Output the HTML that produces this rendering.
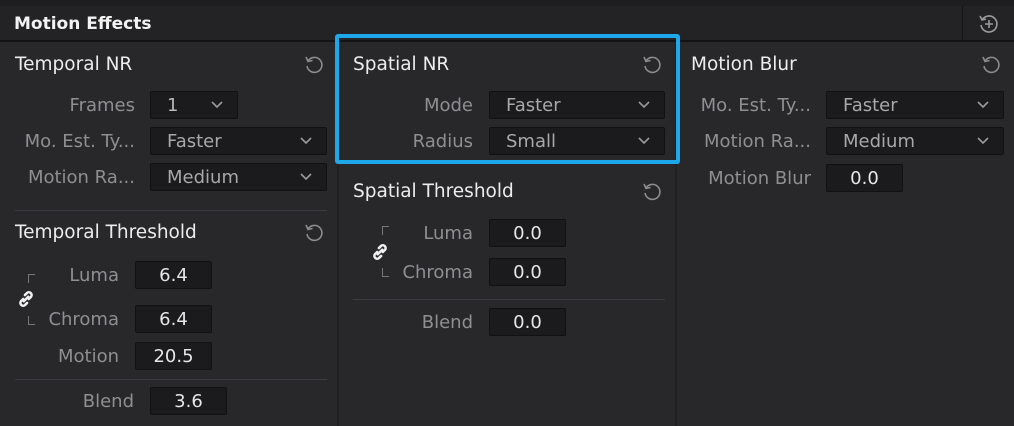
<!DOCTYPE html>
<html><head><style>
*{margin:0;padding:0;box-sizing:border-box}
body{width:1014px;height:426px;background:#28282b;font-family:"DejaVu Sans","Liberation Sans",sans-serif;position:relative;overflow:hidden}
.a{position:absolute}
.t{position:absolute;color:#ececec;font-size:18.5px;line-height:22px;transform:translateY(1px)}
.l{position:absolute;color:#8f8f92;font-size:18px;line-height:22px;text-align:right;white-space:nowrap;transform:translateY(1px)}
.f{position:absolute;background:#1b1b1d;border:1px solid #111;border-radius:2px;color:#e6e6e6;font-size:18px;line-height:27px;text-align:center}
.d{position:absolute;background:#1b1b1d;border:1px solid #111;border-radius:2px;color:#a8a8aa;font-size:18px;line-height:27px;padding-left:16px}
.d svg{position:absolute;right:14px;top:9px}
.hr{position:absolute;height:1px;background:#3c3c40}
.r{position:absolute;width:22px;height:22px}
</style></head><body>
<div class="a" style="left:0;top:0;width:1014px;height:6px;background:#1e1e20"></div>
<div class="a" style="left:0;top:6px;width:1014px;height:35px;background:#232326"></div>
<div class="a" style="left:0;top:40px;width:1014px;height:2px;background:#141416"></div>
<div class="a" style="left:962px;top:6px;width:1px;height:35px;background:#141416"></div>
<div class="t" style="left:14px;top:12px;font-weight:bold;color:#f2f2f2;font-size:17px">Motion Effects</div>
<svg class="a" style="left:977px;top:12px" width="24" height="24" viewBox="0 0 24 24" fill="none" stroke="#9a9a9c" stroke-width="1.6"><path d="M5 8 A8 8 0 1 1 4 13"/><path d="M3 4 L5 8 L9 7"/><path d="M12 8v8M8 12h8"/></svg>
<div class="a" style="left:337px;top:42px;width:2px;height:384px;background:#202022"></div>
<div class="a" style="left:675px;top:42px;width:2px;height:384px;background:#202022"></div>

<svg width="0" height="0" style="position:absolute"><defs>
<symbol id="rs" viewBox="0 0 22 22"><g fill="none" stroke="#8c8c8e" stroke-width="1.6"><path d="M5 8 A7.5 7.5 0 1 1 4 13"/><path d="M3 4 L5 8.5 L9.5 7.5"/></g></symbol>
<symbol id="cv" viewBox="0 0 12 8"><path d="M1 1 L6 6 L11 1" fill="none" stroke="#9a9a9c" stroke-width="1.6"/></symbol>
<symbol id="lk" viewBox="0 0 16 16"><g fill="none" stroke="#f0f0f0" stroke-width="2.2" stroke-linecap="round"><path d="M7 4.5 L9 2.5 a2.5 2.5 0 0 1 3.5 3.5 L10.5 8"/><path d="M9 11.5 L7 13.5 a2.5 2.5 0 0 1 -3.5 -3.5 L5.5 8"/><path d="M6 10 L10 6"/></g></symbol>
</defs></svg>

<!-- Column 1 -->
<div class="t" style="left:15px;top:53px">Temporal NR</div>
<svg class="r" style="left:303px;top:53px"><use href="#rs"/></svg>
<div class="l" style="left:0;width:135px;top:94px">Frames</div>
<div class="d" style="left:150px;top:91px;width:88px;height:28px;color:#b8b8ba">1<svg width="12" height="8"><use href="#cv"/></svg></div>
<div class="l" style="left:0;width:135px;top:130px">Mo. Est. Ty...</div>
<div class="d" style="left:150px;top:127px;width:177px;height:28px">Faster<svg width="12" height="8"><use href="#cv"/></svg></div>
<div class="l" style="left:0;width:135px;top:166px">Motion Ra...</div>
<div class="d" style="left:150px;top:163px;width:177px;height:28px">Medium<svg width="12" height="8"><use href="#cv"/></svg></div>
<div class="hr" style="left:15px;top:210px;width:312px"></div>
<div class="t" style="left:15px;top:221px">Temporal Threshold</div>
<svg class="r" style="left:303px;top:221px"><use href="#rs"/></svg>
<div class="a" style="left:28px;top:274px;width:7px;height:9px;border-left:1px solid #77777a;border-top:1px solid #77777a"></div>
<div class="a" style="left:28px;top:316px;width:7px;height:9px;border-left:1px solid #77777a;border-bottom:1px solid #77777a"></div>
<svg class="a" style="left:17px;top:290px" width="18" height="18"><use href="#lk"/></svg>
<div class="l" style="left:0;width:119px;top:264px">Luma</div>
<div class="f" style="left:135px;top:261px;width:77px;height:28px">6.4</div>
<div class="l" style="left:0;width:119px;top:308px">Chroma</div>
<div class="f" style="left:135px;top:305px;width:77px;height:28px">6.4</div>
<div class="l" style="left:0;width:119px;top:345px">Motion</div>
<div class="f" style="left:135px;top:342px;width:77px;height:28px">20.5</div>
<div class="hr" style="left:15px;top:379px;width:312px"></div>
<div class="l" style="left:0;width:134px;top:390px">Blend</div>
<div class="f" style="left:150px;top:387px;width:77px;height:28px">3.6</div>

<!-- Column 2 -->
<div class="t" style="left:353px;top:53px">Spatial NR</div>
<svg class="r" style="left:641px;top:53px"><use href="#rs"/></svg>
<div class="l" style="left:340px;width:133px;top:94px">Mode</div>
<div class="d" style="left:489px;top:91px;width:176px;height:28px">Faster<svg width="12" height="8"><use href="#cv"/></svg></div>
<div class="l" style="left:340px;width:133px;top:130px">Radius</div>
<div class="d" style="left:489px;top:127px;width:176px;height:28px">Small<svg width="12" height="8"><use href="#cv"/></svg></div>
<div class="a" style="left:335px;top:34px;width:345px;height:130px;border:4px solid #1ea7eb;border-radius:3px"></div>
<div class="t" style="left:353px;top:180px">Spatial Threshold</div>
<svg class="r" style="left:641px;top:180px"><use href="#rs"/></svg>
<div class="a" style="left:382px;top:226px;width:7px;height:9px;border-left:1px solid #77777a;border-top:1px solid #77777a"></div>
<div class="a" style="left:382px;top:268px;width:7px;height:9px;border-left:1px solid #77777a;border-bottom:1px solid #77777a"></div>
<svg class="a" style="left:371px;top:243px" width="18" height="18"><use href="#lk"/></svg>
<div class="l" style="left:340px;width:133px;top:222px">Luma</div>
<div class="f" style="left:489px;top:219px;width:77px;height:28px">0.0</div>
<div class="l" style="left:340px;width:133px;top:261px">Chroma</div>
<div class="f" style="left:489px;top:258px;width:77px;height:28px">0.0</div>
<div class="hr" style="left:353px;top:299px;width:312px"></div>
<div class="l" style="left:340px;width:133px;top:311px">Blend</div>
<div class="f" style="left:489px;top:308px;width:77px;height:28px">0.0</div>

<!-- Column 3 -->
<div class="t" style="left:691px;top:53px">Motion Blur</div>
<svg class="r" style="left:980px;top:53px"><use href="#rs"/></svg>
<div class="l" style="left:680px;width:131px;top:94px">Mo. Est. Ty...</div>
<div class="d" style="left:826px;top:91px;width:178px;height:28px">Faster<svg width="12" height="8"><use href="#cv"/></svg></div>
<div class="l" style="left:680px;width:131px;top:130px">Motion Ra...</div>
<div class="d" style="left:826px;top:127px;width:178px;height:28px">Medium<svg width="12" height="8"><use href="#cv"/></svg></div>
<div class="l" style="left:680px;width:131px;top:167px">Motion Blur</div>
<div class="f" style="left:826px;top:164px;width:77px;height:28px">0.0</div>
</body></html>
